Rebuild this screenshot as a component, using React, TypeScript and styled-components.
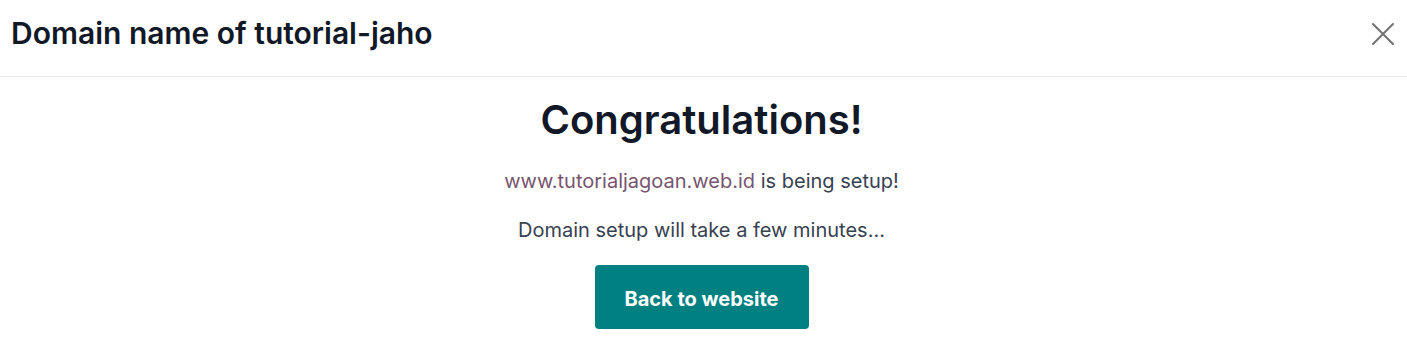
import React from 'react'
import styled, { createGlobalStyle } from 'styled-components'

const GlobalStyle = createGlobalStyle`
  body {
    margin: 0;
    background: #ffffff;
    font-family: Inter, "Noto Sans", sans-serif;
  }
`

const Modal = styled.div`
  width: 100%;
  background: #ffffff;
`

const Header = styled.div`
  height: 77px;
  display: flex;
  align-items: center;
  justify-content: space-between;
  padding: 0 11px 0 11px;
  box-sizing: border-box;
  border-bottom: 1px solid #e5e7eb;
`

const Title = styled.h2`
  margin: 0;
  margin-top: -10px;
  font-size: 30px;
  line-height: 36px;
  font-weight: 600;
  color: #111827;
`

const CloseButton = styled.button`
  border: 0;
  background: none;
  padding: 0;
  width: 26px;
  height: 26px;
  margin-top: -8px;
  color: #737373;
  cursor: pointer;
  display: flex;
  align-items: center;
  justify-content: center;
`

const Body = styled.div`
  display: flex;
  flex-direction: column;
  align-items: center;
  padding: 19px 4px 0 0;
`

const Heading = styled.h1`
  margin: 0;
  font-size: 40px;
  font-weight: 600;
  color: #111827;
  line-height: 48px;
`

const Line = styled.p<{ $top: number }>`
  margin: ${(p) => p.$top}px 0 0;
  font-size: 20px;
  line-height: 28px;
  color: #374151;
`

const Link = styled.a`
  color: #785570;
  text-decoration: none;
`

const PrimaryButton = styled.button`
  margin-top: 21px;
  width: 214px;
  height: 64px;
  padding: 3px 0 0;
  border: 0;
  border-radius: 4px;
  background: #008080;
  color: #ffffff;
  font-family: inherit;
  font-size: 20px;
  font-weight: 700;
  cursor: pointer;
`

const App = () => {
  return (
    <Modal>
      <GlobalStyle />
      <Header>
        <Title>Domain name of tutorial-jaho</Title>
        <CloseButton aria-label="Close">
          <svg width="24" height="24" viewBox="0 0 24 24" fill="none" stroke="currentColor" strokeWidth="2" strokeLinecap="round">
            <path d="M2 2 22 22M22 2 2 22" />
          </svg>
        </CloseButton>
      </Header>
      <Body>
        <Heading>Congratulations!</Heading>
        <Line $top={23}>
          <Link href="#">www.tutorialjagoan.web.id</Link> is being setup!
        </Line>
        <Line $top={21}>Domain setup will take a few minutes...</Line>
        <PrimaryButton>Back to website</PrimaryButton>
      </Body>
    </Modal>
  )
}

export default App
